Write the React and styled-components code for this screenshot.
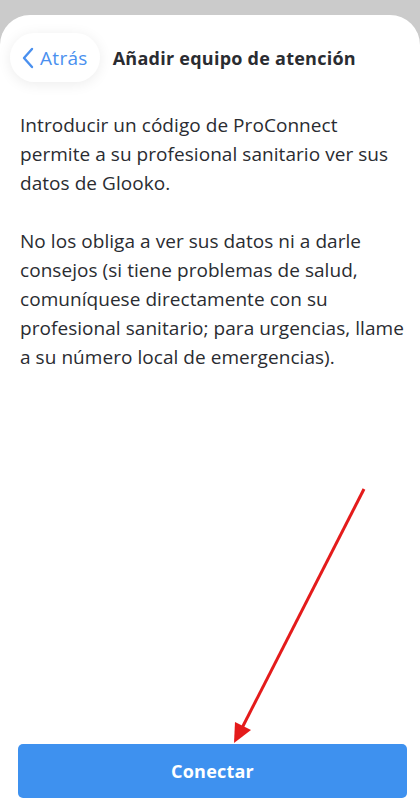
import React from "react";
import styled, { createGlobalStyle } from "styled-components";

const GlobalStyle = createGlobalStyle`
  html, body {
    margin: 0;
    padding: 0;
    background: #cbcbcb;
  }
  body {
    font-family: "Open Sans", "Noto Sans", "Liberation Sans", sans-serif;
  }
`;

const Screen = styled.div`
  width: 420px;
  height: 811px;
  padding-top: 15px;
  box-sizing: border-box;
  background: #cbcbcb;
  position: relative;
  overflow: hidden;
`;

const Sheet = styled.div`
  height: 796px;
  background: #fff;
  border-radius: 30px 30px 0 0;
  display: flex;
  flex-direction: column;
`;

const Header = styled.div`
  display: flex;
  align-items: center;
  gap: 13px;
  padding: 18px 10px 0;
`;

const BackPill = styled.button`
  display: flex;
  align-items: center;
  gap: 6px;
  height: 49px;
  padding: 0 12px 0 12px;
  border: none;
  border-radius: 25px;
  background: #fff;
  box-shadow: 0 2px 14px rgba(0, 0, 0, 0.08);
  color: #4a90ef;
  font-family: inherit;
  font-size: 19px;
  letter-spacing: 0.3px;
  cursor: pointer;
`;

const Title = styled.h1`
  margin: 0;
  font-size: 18px;
  font-weight: 700;
  letter-spacing: 0.25px;
  color: #2a2c31;
`;

const Body = styled.div`
  padding: 29px 20px 0;
  flex: 1;
`;

const Para = styled.p`
  margin: 0 0 29px;
  font-size: 19px;
  line-height: 29px;
  letter-spacing: 0.05px;
  color: #2a2c31;
`;

const Line = styled.span`
  display: block;
  white-space: nowrap;
`;

const Footer = styled.div`
  padding: 0 13px 13px 18px;
`;

const MainButton = styled.button`
  width: 100%;
  height: 54px;
  border: none;
  border-radius: 5px;
  background: #3e91ef;
  color: #fff;
  font-family: inherit;
  font-size: 18px;
  font-weight: 700;
  letter-spacing: 0.2px;
`;

const Overlay = styled.svg`
  position: absolute;
  left: 0;
  top: 0;
  pointer-events: none;
`;

const intro = [
  "Introducir un código de ProConnect",
  "permite a su profesional sanitario ver sus",
  "datos de Glooko.",
];

const notice = [
  "No los obliga a ver sus datos ni a darle",
  "consejos (si tiene problemas de salud,",
  "comuníquese directamente con su",
  "profesional sanitario; para urgencias, llame",
  "a su número local de emergencias).",
];

export default function App() {
  return (
    <>
      <GlobalStyle />
      <Screen>
        <Sheet>
          <Header>
            <BackPill>
              <svg width="12" height="22" viewBox="0 0 12 22">
                <path d="M10 2 L2 11 L10 20" fill="none" stroke="#4a90ef" strokeWidth="2.4" strokeLinecap="round" strokeLinejoin="round" />
              </svg>
              Atrás
            </BackPill>
            <Title>Añadir equipo de atención</Title>
          </Header>
          <Body>
            <Para>
              {intro.map((t) => (
                <Line key={t}>{t}</Line>
              ))}
            </Para>
            <Para>
              {notice.map((t) => (
                <Line key={t}>{t}</Line>
              ))}
            </Para>
          </Body>
          <Footer>
            <MainButton>Conectar</MainButton>
          </Footer>
        </Sheet>
        <Overlay width="420" height="811" viewBox="0 0 420 811">
          <line x1="364" y1="489" x2="242" y2="728" stroke="#e41b1b" strokeWidth="3" />
          <polygon points="234,743 235,722 251,730" fill="#e41b1b" />
        </Overlay>
      </Screen>
    </>
  );
}
